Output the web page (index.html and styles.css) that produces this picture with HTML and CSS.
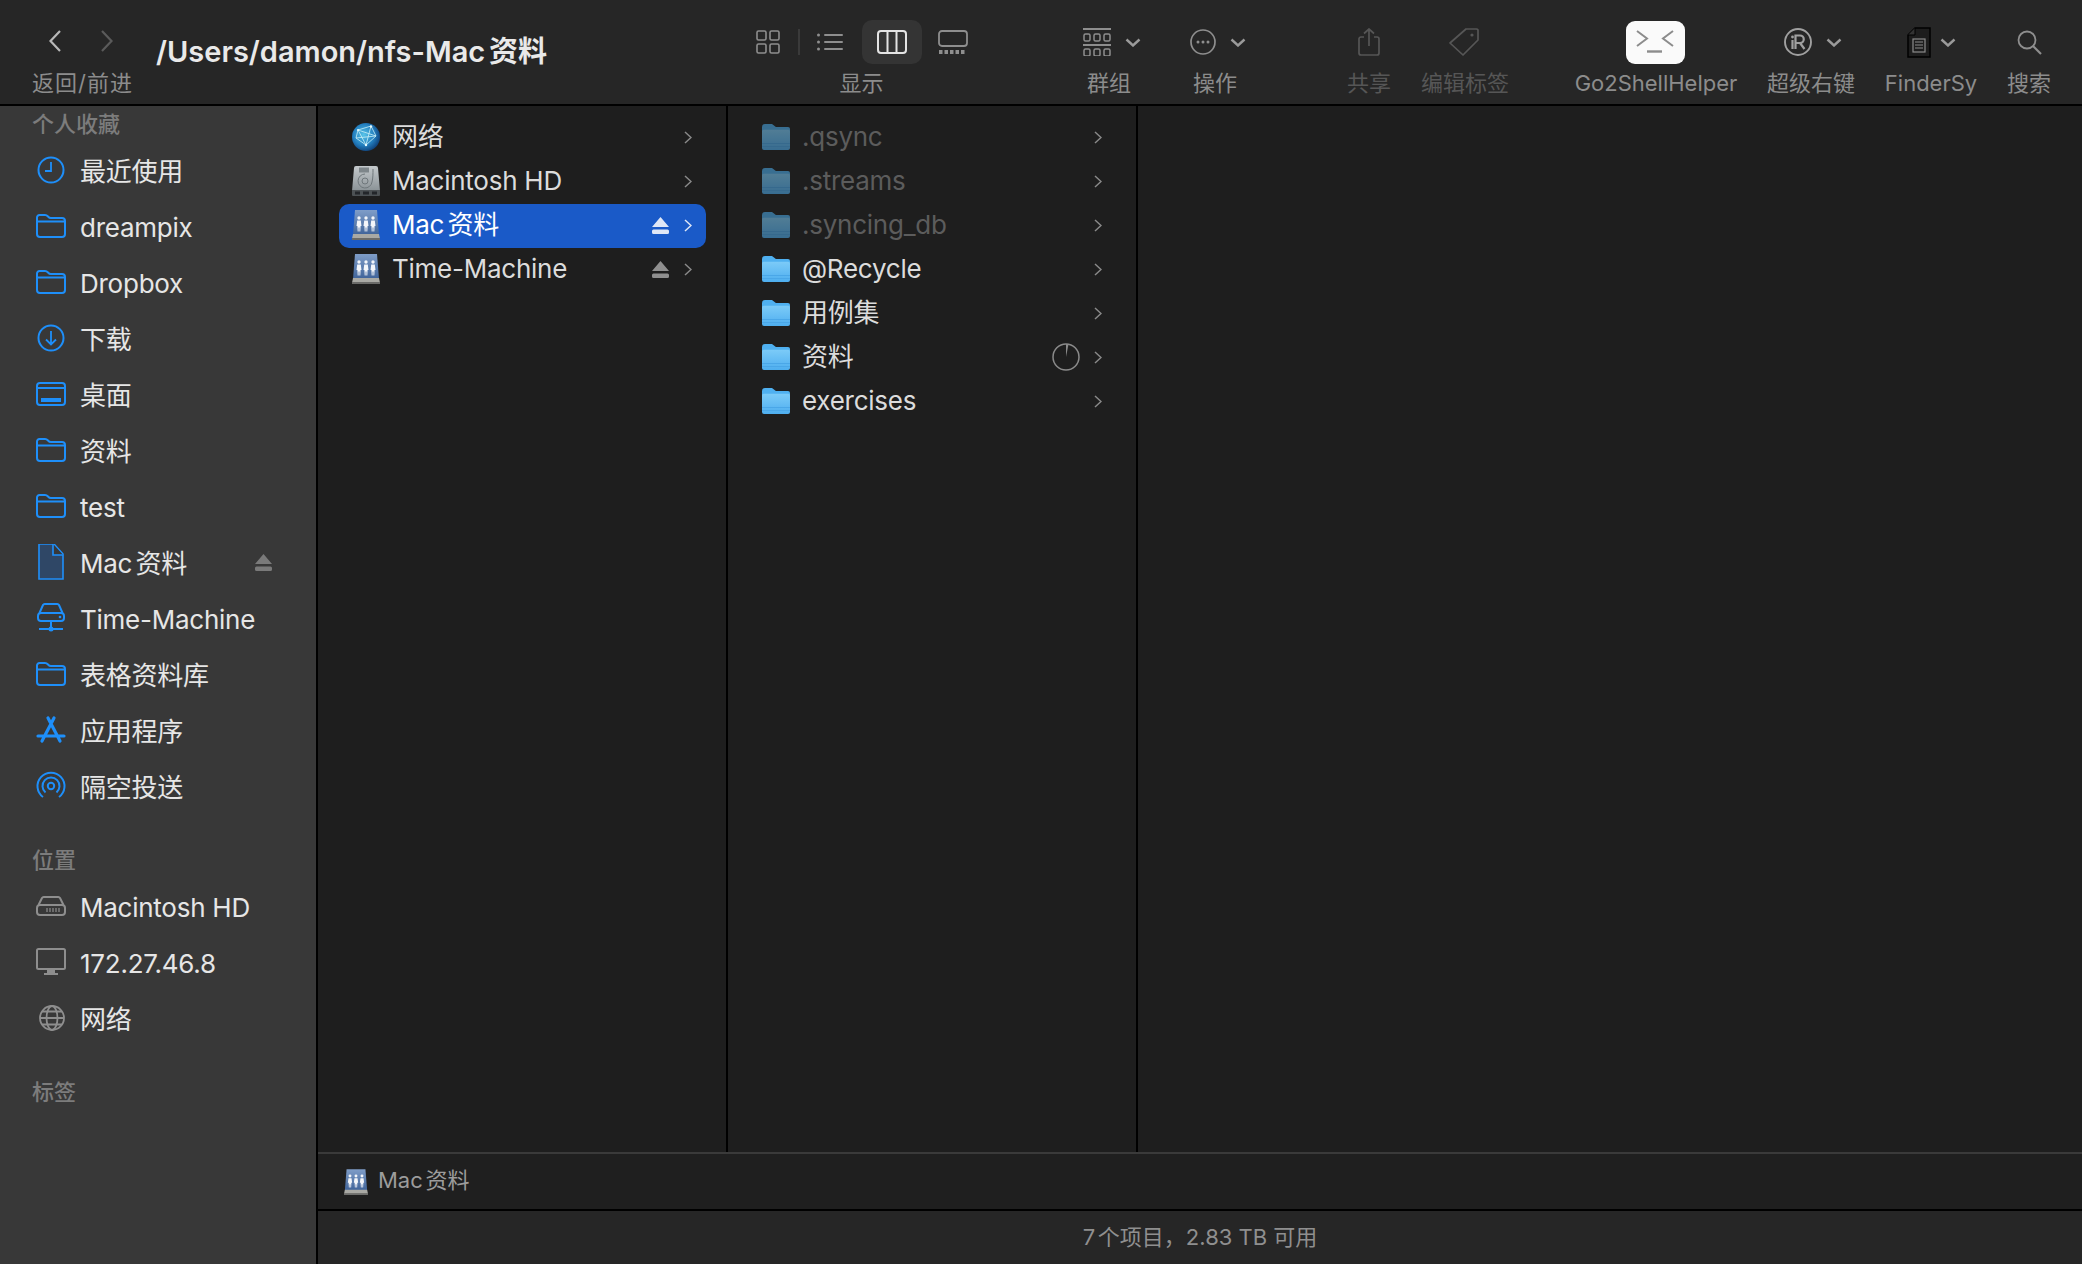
FILE: index.html
```html
<!doctype html>
<html lang="zh-CN">

<head>
	<title>Mac资料</title>
	<link rel="stylesheet" href="styles.css">
</head>

<body>

	<!-- shared icons -->
	<svg class="defs">
		<defs>
			<linearGradient id="g-folder" x1="0" y1="0" x2="0" y2="1">
				<stop offset="0" stop-color="#7ccbf8"/>
				<stop offset="1" stop-color="#4eaeef"/>
			</linearGradient>
			<linearGradient id="g-vol" x1="0" y1="0" x2="0" y2="1">
				<stop offset="0" stop-color="#7f9dc8"/>
				<stop offset="1" stop-color="#3f6399"/>
			</linearGradient>
			<linearGradient id="g-hd" x1="0" y1="0" x2="0" y2="1">
				<stop offset="0" stop-color="#c4c9cc"/>
				<stop offset="1" stop-color="#8a9296"/>
			</linearGradient>
			<radialGradient id="g-globe" cx="0.42" cy="0.42" r="0.62">
				<stop offset="0" stop-color="#58c4e8"/>
				<stop offset="0.6" stop-color="#2480c0"/>
				<stop offset="1" stop-color="#0e3f78"/>
			</radialGradient>
		</defs>
		<symbol id="i-folder" viewBox="0 0 30 24">
			<path d="M1 20V3.5A2.5 2.5 0 0 1 3.500 1H9c1.500 0 2.200.6 3 1.500.8.9 1.500 1.500 3 1.500h11a3 3 0 0 1 3 3v13a3 3 0 0 1-3 3H4a3 3 0 0 1-3-3zM1 7.500h28" fill="none" stroke="currentColor" stroke-width="2"/>
		</symbol>
		<symbol id="i-big-folder" viewBox="0 0 28 26">
			<path d="M0 3a3 3 0 0 1 3-3h6c1.500 0 2 .6 3 1.500.8.8 1.400 1.500 3 1.500h11a2 2 0 0 1 2 2v4H0z" fill="#4fb0f0"/>
			<path d="M0 7.500c0-1 .8-1.800 1.800-1.800h24.400c1 0 1.800.8 1.800 1.800V24a2 2 0 0 1-2 2H2a2 2 0 0 1-2-2z" fill="url(#g-folder)"/>
			<path d="M0 19.500h28M0 22.500h28" stroke="#4aa7e8" stroke-width="1"/>
		</symbol>
		<symbol id="i-vol" viewBox="0 0 28 30">
			<path d="M3 0h22l2 25H1z" fill="url(#g-vol)"/>
			<path d="M1 24h26l1 5a1 1 0 0 1-1 1H1a1 1 0 0 1-1-1z" fill="#a9a9a4"/>
			<path d="M0 28h28v2H0z" fill="#6a6a68"/>
			<g fill="#f4f6fa">
				<circle cx="7" cy="8" r="1.700"/>
				<circle cx="14" cy="8" r="1.700"/>
				<circle cx="21" cy="8" r="1.700"/>
				<path d="M5.200 10.500h3.600l.7 5.500h-.9l-.3 5.500H7.400v-4h-.8v4H5.700L5.400 16h-.9zM12.200 10.500h3.600l.7 5.500h-.9l-.3 5.500h-.9v-4h-.8v4h-.9l-.3-5.500h-.9zM19.200 10.500h3.600l.7 5.500h-.9l-.3 5.500h-.9v-4h-.8v4h-.9l-.3-5.500h-.9z"/>
			</g>
		</symbol>
		<symbol id="i-hd" viewBox="0 0 28 30">
			<path d="M4 0h20a2 2 0 0 1 2 2l2 23H0L2 2a2 2 0 0 1 2-2z" fill="url(#g-hd)"/>
			<path d="M7 1.500h10v5H7z" fill="#7e868a"/>
			<path d="M21 3c0 5 0 9-1 13a7 7 0 1 1-7-8" fill="none" stroke="#6f777b" stroke-width="1"/>
			<circle cx="13" cy="15" r="3" fill="none" stroke="#6f777b" stroke-width="1"/>
			<path d="M0 24h28v5a1 1 0 0 1-1 1H1a1 1 0 0 1-1-1z" fill="#4c5154"/>
			<path d="M3 27h5M11 27h6M20 27h5" stroke="#23262a" stroke-width="3"/>
		</symbol>
		<symbol id="i-globe" viewBox="0 0 28 28">
			<circle cx="14" cy="14" r="14" fill="url(#g-globe)"/>
			<path d="M6 7 19 3 24 13 14 22 4 15zM6 7l8 15M19 3l-5 19M4 15l20-2M6 7l18 6" fill="none" stroke="#c9f0f8" stroke-width="0.8"/>
			<circle cx="19" cy="3.500" r="1.200" fill="#e4fbff"/>
			<circle cx="14" cy="22" r="1.200" fill="#e4fbff"/>
			<circle cx="6" cy="7" r="1" fill="#e4fbff"/>
		</symbol>
		<symbol id="i-chev" viewBox="0 0 8 13">
			<path d="M1 1l6 5.500L1 12" fill="none" stroke="currentColor" stroke-width="1.500"/>
		</symbol>
		<symbol id="i-eject" viewBox="0 0 17 17">
			<path d="M8.500 0 17 10H0z M1.500 12.500h14a1.500 1.500 0 0 1 1.500 1.500v1.500a1.500 1.500 0 0 1-1.500 1.500h-14A1.500 1.500 0 0 1 0 15.500V14a1.500 1.500 0 0 1 1.500-1.500z" fill="currentColor"/>
		</symbol>
		<symbol id="i-down" viewBox="0 0 16 9">
			<path d="M1.500 1.500 8 7.500l6.500-6" fill="none" stroke="currentColor" stroke-width="2.400"/>
		</symbol>
	</svg>

	<header class="toolbar">
		<div class="tool tool-nav">
			<div class="tool-icons nav-icons">
				<svg width="12" height="22" viewBox="0 0 12 22"><path d="M11 1 1.500 11 11 21" fill="none" stroke="#b8b8b8" stroke-width="2.200"/></svg>
				<svg width="12" height="22" viewBox="0 0 12 22"><path d="M1 1l9.500 10L1 21" fill="none" stroke="#5a5a5a" stroke-width="2.200"/></svg>
			</div>
			<span class="tool-label label-wide">返回/前进</span>
		</div>

		<h1 class="title">/Users/damon/nfs-Mac资料</h1>

		<div class="tool tool-view">
			<div class="tool-icons view-icons">
				<span class="view-btn">
					<svg width="24" height="24" viewBox="0 0 24 24"><g fill="none" stroke="currentColor" stroke-width="1.600"><rect x="1" y="1" width="9" height="9" rx="1.500"/><rect x="14" y="1" width="9" height="9" rx="1.500"/><rect x="1" y="14" width="9" height="9" rx="1.500"/><rect x="14" y="14" width="9" height="9" rx="1.500"/></g></svg>
				</span>
				<span class="view-sep"></span>
				<span class="view-btn">
					<svg width="26" height="18" viewBox="0 0 26 18"><g fill="currentColor"><circle cx="1.500" cy="2" r="1.500"/><circle cx="1.500" cy="9" r="1.500"/><circle cx="1.500" cy="16" r="1.500"/><rect x="7" y="1" width="19" height="2" rx="1"/><rect x="7" y="8" width="19" height="2" rx="1"/><rect x="7" y="15" width="19" height="2" rx="1"/></g></svg>
				</span>
				<span class="view-btn view-btn-on">
					<svg width="30" height="24" viewBox="0 0 30 24"><g fill="none" stroke="currentColor" stroke-width="2"><rect x="1" y="1" width="28" height="22" rx="3"/><path d="M10.500 1v22M19.500 1v22"/></g></svg>
				</span>
				<span class="view-btn">
					<svg width="30" height="24" viewBox="0 0 30 24"><rect x="1" y="1" width="28" height="15" rx="3" fill="none" stroke="currentColor" stroke-width="1.800"/><g fill="currentColor"><rect x="1" y="20" width="3.500" height="4"/><rect x="6.500" y="20" width="3.500" height="4"/><rect x="12" y="20" width="3.500" height="4"/><rect x="17.500" y="20" width="3.500" height="4"/><rect x="23" y="20" width="3.500" height="4"/></g></svg>
				</span>
			</div>
			<span class="tool-label">显示</span>
		</div>

		<div class="tool tool-group">
			<div class="tool-icons">
				<svg width="28" height="28" viewBox="0 0 28 28"><g fill="none" stroke="currentColor" stroke-width="1.500"><path d="M0 1h28M0 17h28" stroke-width="2"/><rect x="1" y="6" width="6" height="7" rx="1.500"/><rect x="11" y="6" width="6" height="7" rx="1.500"/><rect x="21" y="6" width="6" height="7" rx="1.500"/><rect x="1" y="21" width="6" height="7" rx="1.500"/><rect x="11" y="21" width="6" height="7" rx="1.500"/><rect x="21" y="21" width="6" height="7" rx="1.500"/></g></svg>
				<svg class="down" width="16" height="9"><use href="#i-down"/></svg>
			</div>
			<span class="tool-label">群组</span>
		</div>

		<div class="tool tool-action">
			<div class="tool-icons">
				<svg width="26" height="26" viewBox="0 0 26 26"><circle cx="13" cy="13" r="12" fill="none" stroke="currentColor" stroke-width="1.700"/><g fill="currentColor"><circle cx="8" cy="13" r="1.500"/><circle cx="13" cy="13" r="1.500"/><circle cx="18" cy="13" r="1.500"/></g></svg>
				<svg class="down" width="16" height="9"><use href="#i-down"/></svg>
			</div>
			<span class="tool-label">操作</span>
		</div>

		<div class="tool tool-share is-off">
			<div class="tool-icons">
				<svg width="22" height="28" viewBox="0 0 22 28"><path d="M6 9H3a2 2 0 0 0-2 2v14a2 2 0 0 0 2 2h16a2 2 0 0 0 2-2V11a2 2 0 0 0-2-2h-3M11 18V1M6 5.500 11 1l5 4.500" fill="none" stroke="currentColor" stroke-width="1.700"/></svg>
			</div>
			<span class="tool-label">共享</span>
		</div>

		<div class="tool tool-tag is-off">
			<div class="tool-icons">
				<svg width="30" height="28" viewBox="0 0 30 28"><path d="M29 2v10L14 27 1 15 17 1h10a2 2 0 0 1 2 1z" fill="none" stroke="currentColor" stroke-width="1.700" stroke-linejoin="round"/><circle cx="23" cy="7" r="1.600" fill="currentColor"/></svg>
			</div>
			<span class="tool-label">编辑标签</span>
		</div>

		<div class="tool tool-go2">
			<div class="tool-icons">
				<svg width="59" height="43" viewBox="0 0 59 43"><rect width="59" height="43" rx="9" fill="#fafafa"/><path d="M11 10l10 7.500L11 25M47 10l-10 7.500L47 25" fill="none" stroke="#8c8c8c" stroke-width="2"/><path d="M21 30.500h15" stroke="#8c8c8c" stroke-width="2.400"/></svg>
			</div>
			<span class="tool-label">Go2ShellHelper</span>
		</div>

		<div class="tool tool-right">
			<div class="tool-icons">
				<svg width="28" height="28" viewBox="0 0 28 28"><circle cx="14" cy="14" r="13" fill="none" stroke="#a0a0a0" stroke-width="1.900"/><path d="M8.500 12v9M11.500 21V7.500H16a3.700 3.700 0 0 1 0 7.500h-4.500M16 15l4.500 6" fill="none" stroke="#a0a0a0" stroke-width="2.200"/><circle cx="8.500" cy="9" r="1.400" fill="#a0a0a0"/></svg>
				<svg class="down" width="16" height="9"><use href="#i-down"/></svg>
			</div>
			<span class="tool-label">超级右键</span>
		</div>

		<div class="tool tool-sync">
			<div class="tool-icons">
				<svg width="24" height="31" viewBox="0 0 24 31"><path d="M8 1h15v29H1V8z" fill="#1d1d1d" stroke="#000" stroke-width="1.500"/><path d="M8 1v7H1" fill="#333" stroke="#000" stroke-width="1"/><rect x="6" y="12" width="12" height="13" fill="none" stroke="#8c8c8c" stroke-width="1.200"/><path d="M8 15h8M8 18h8M8 21h8" stroke="#8c8c8c" stroke-width="1.200"/></svg>
				<svg class="down" width="16" height="9"><use href="#i-down"/></svg>
			</div>
			<span class="tool-label">FinderSy</span>
		</div>

		<div class="tool tool-search">
			<div class="tool-icons">
				<svg width="25" height="25" viewBox="0 0 25 25"><circle cx="10" cy="10" r="8.500" fill="none" stroke="currentColor" stroke-width="1.800"/><path d="M16 16l8 8" stroke="currentColor" stroke-width="2.200"/></svg>
			</div>
			<span class="tool-label">搜索</span>
		</div>
	</header>

	<div class="main">
		<aside class="sidebar">
			<h2 class="side-head">个人收藏</h2>
			<div class="side-row">
				<svg class="side-icon" viewBox="0 0 32 36"><circle cx="16" cy="18" r="12.500" fill="none" stroke="currentColor" stroke-width="2"/><path d="M16 10v9h-6" fill="none" stroke="currentColor" stroke-width="1.800"/></svg>
				<span>最近使用</span>
			</div>
			<div class="side-row"><svg class="side-icon"><use href="#i-folder" x="1" y="6" width="30" height="24"/></svg><span>dreampix</span></div>
			<div class="side-row"><svg class="side-icon"><use href="#i-folder" x="1" y="6" width="30" height="24"/></svg><span>Dropbox</span></div>
			<div class="side-row">
				<svg class="side-icon" viewBox="0 0 32 36"><circle cx="16" cy="18" r="12.500" fill="none" stroke="currentColor" stroke-width="2"/><path d="M16 11v13M11 19.500l5 5 5-5" fill="none" stroke="currentColor" stroke-width="1.800"/></svg>
				<span>下载</span>
			</div>
			<div class="side-row">
				<svg class="side-icon" viewBox="0 0 32 36"><rect x="2" y="7" width="28" height="22" rx="3" fill="none" stroke="currentColor" stroke-width="2"/><path d="M2 12h28" stroke="currentColor" stroke-width="2"/><rect x="6" y="22" width="20" height="4" fill="currentColor"/></svg>
				<span>桌面</span>
			</div>
			<div class="side-row"><svg class="side-icon"><use href="#i-folder" x="1" y="6" width="30" height="24"/></svg><span>资料</span></div>
			<div class="side-row"><svg class="side-icon"><use href="#i-folder" x="1" y="6" width="30" height="24"/></svg><span>test</span></div>
			<div class="side-row">
				<svg class="side-icon" viewBox="0 0 32 36"><path d="M4 0h15l9 10v25H4z" fill="#2f4766" stroke="currentColor" stroke-width="1.600"/><path d="M18 0v11h10" fill="#383838" stroke="currentColor" stroke-width="1.600"/></svg>
				<span>Mac资料</span>
				<svg class="side-eject"><use href="#i-eject"/></svg>
			</div>
			<div class="side-row">
				<svg class="side-icon" viewBox="0 0 32 36"><path d="M4 14 8 5a2 2 0 0 1 2-1h12a2 2 0 0 1 2 1l4 9M6 13h20a3 3 0 0 1 3 3v2a3 3 0 0 1-3 3H6a3 3 0 0 1-3-3v-2a3 3 0 0 1 3-3z" fill="none" stroke="currentColor" stroke-width="2"/><circle cx="25" cy="17" r="1.300" fill="currentColor"/><path d="M16 21v8M4 29h24" stroke="currentColor" stroke-width="2"/><circle cx="16" cy="29" r="2.500" fill="currentColor"/></svg>
				<span>Time-Machine</span>
			</div>
			<div class="side-row"><svg class="side-icon"><use href="#i-folder" x="1" y="6" width="30" height="24"/></svg><span>表格资料库</span></div>
			<div class="side-row">
				<svg class="side-icon" viewBox="0 0 32 36"><path d="M13 6l12 23M19 6 7 29M3 24h26" fill="none" stroke="currentColor" stroke-width="3.200" stroke-linecap="round"/></svg>
				<span>应用程序</span>
			</div>
			<div class="side-row">
				<svg class="side-icon" viewBox="0 0 32 36"><g fill="none" stroke="currentColor" stroke-width="2"><path d="M8 29A13.500 13.500 0 1 1 24 29"/><path d="M10.500 24.500A8.500 8.500 0 1 1 21.500 24.500"/></g><circle cx="16" cy="18" r="3.200" fill="none" stroke="currentColor" stroke-width="2"/></svg>
				<span>隔空投送</span>
			</div>

			<h2 class="side-head side-head-next">位置</h2>
			<div class="side-row side-row-gray">
				<svg class="side-icon" viewBox="0 0 32 36"><path d="M3 18 7 10a2 2 0 0 1 2-1h14a2 2 0 0 1 2 1l4 8M5 17h22a3 3 0 0 1 3 3v4a3 3 0 0 1-3 3H5a3 3 0 0 1-3-3v-4a3 3 0 0 1 3-3z" fill="none" stroke="currentColor" stroke-width="2"/><path d="M12 20v4M15 20v4M18 20v4M21 20v4M24 20v4" stroke="currentColor" stroke-width="1.200"/></svg>
				<span>Macintosh HD</span>
			</div>
			<div class="side-row side-row-gray">
				<svg class="side-icon" viewBox="0 0 32 36"><rect x="2" y="5" width="28" height="20" rx="1.500" fill="none" stroke="currentColor" stroke-width="2"/><path d="M12 26h8v3h-8zM9 29h14v2H9z" fill="currentColor"/></svg>
				<span>172.27.46.8</span>
			</div>
			<div class="side-row side-row-gray">
				<svg class="side-icon" viewBox="0 0 32 36"><g fill="none" stroke="currentColor" stroke-width="1.800"><circle cx="17" cy="18" r="12"/><ellipse cx="17" cy="18" rx="5.500" ry="12"/><path d="M5 18h24M7 11.500h20M7 24.500h20"/></g></svg>
				<span>网络</span>
			</div>

			<h2 class="side-head side-head-next">标签</h2>
		</aside>

		<div class="content">
			<div class="columns">
				<section class="col">
					<div class="col-row"><svg class="col-icon"><use href="#i-globe"/></svg><span class="col-name">网络</span><svg class="col-chev"><use href="#i-chev"/></svg></div>
					<div class="col-row"><svg class="col-icon"><use href="#i-hd"/></svg><span class="col-name">Macintosh HD</span><svg class="col-chev"><use href="#i-chev"/></svg></div>
					<div class="col-row col-row-on"><svg class="col-icon"><use href="#i-vol"/></svg><span class="col-name">Mac资料</span><svg class="col-eject"><use href="#i-eject"/></svg><svg class="col-chev"><use href="#i-chev"/></svg></div>
					<div class="col-row"><svg class="col-icon"><use href="#i-vol"/></svg><span class="col-name">Time-Machine</span><svg class="col-eject"><use href="#i-eject"/></svg><svg class="col-chev"><use href="#i-chev"/></svg></div>
				</section>
				<section class="col">
					<div class="col-row col-row-hidden"><svg class="col-icon"><use href="#i-big-folder"/></svg><span class="col-name">.qsync</span><svg class="col-chev"><use href="#i-chev"/></svg></div>
					<div class="col-row col-row-hidden"><svg class="col-icon"><use href="#i-big-folder"/></svg><span class="col-name">.streams</span><svg class="col-chev"><use href="#i-chev"/></svg></div>
					<div class="col-row col-row-hidden"><svg class="col-icon"><use href="#i-big-folder"/></svg><span class="col-name">.syncing_db</span><svg class="col-chev"><use href="#i-chev"/></svg></div>
					<div class="col-row"><svg class="col-icon"><use href="#i-big-folder"/></svg><span class="col-name">@Recycle</span><svg class="col-chev"><use href="#i-chev"/></svg></div>
					<div class="col-row"><svg class="col-icon"><use href="#i-big-folder"/></svg><span class="col-name">用例集</span><svg class="col-chev"><use href="#i-chev"/></svg></div>
					<div class="col-row">
						<svg class="col-icon"><use href="#i-big-folder"/></svg>
						<span class="col-name">资料</span>
						<svg class="col-progress" viewBox="0 0 28 28"><circle cx="14" cy="14" r="13" fill="none" stroke="#8a8a8a" stroke-width="1.500"/><path d="M14 14V1l2.500.3z" fill="#8a8a8a"/></svg>
						<svg class="col-chev"><use href="#i-chev"/></svg>
					</div>
					<div class="col-row"><svg class="col-icon"><use href="#i-big-folder"/></svg><span class="col-name">exercises</span><svg class="col-chev"><use href="#i-chev"/></svg></div>
				</section>
				<section class="col col-last"></section>
			</div>
			<div class="pathbar">
				<svg class="path-icon"><use href="#i-vol"/></svg>
				<span class="path-name">Mac资料</span>
			</div>
			<footer class="status">7个项目，2.83 TB 可用</footer>
		</div>
	</div>

</body>
</html>
```

FILE: styles.css
```css
:root {
	--blue: #1e8ffa;
	--gray-icon: #8e8e8e;
	--label: #8c8c8c;
	--label-off: #565656;
	--line: #000000;
}

* {
	box-sizing: border-box;
}

html, body {
	margin: 0;
	height: 100%;
}

body {
	display: flex;
	flex-direction: column;
	height: 100vh;
	overflow: hidden;
	background: #1e1e1e;
	color: #e6e6e6;
	font-family: Inter, "Noto Sans CJK SC", sans-serif;
	font-size: 26px;
	line-height: 30px;
	letter-spacing: -0.25px;
	text-autospace: normal;
}

.defs {
	position: absolute;
	width: 0;
	height: 0;
}

/* toolbar */

.toolbar {
	display: flex;
	align-items: flex-start;
	flex: none;
	height: 106px;
	padding: 20px 0 0 32px;
	background: #262626;
	border-bottom: 2px solid var(--line);
}

.tool {
	display: flex;
	flex-direction: column;
	align-items: center;
	flex: none;
	color: var(--gray-icon);
}

.tool-icons {
	display: flex;
	align-items: center;
	justify-content: center;
	height: 44px;
	gap: 14px;
}

.tool-label {
	margin-top: 5px;
	padding-left: 2px;
	font-size: 22px;
	line-height: 28px;
	letter-spacing: 0;
	color: var(--label);
	white-space: nowrap;
}

.label-wide {
	padding-left: 0;
	letter-spacing: 1px;
}

.is-off,
.is-off .tool-label {
	color: var(--label-off);
}

.down {
	color: #9a9a9a;
}

.tool-nav {
	align-items: flex-start;
	width: 101px;
}

.nav-icons {
	gap: 40px;
	height: 42px;
	margin-bottom: 2px;
	padding-left: 17px;
}

.title {
	flex: none;
	width: 392px;
	margin: 12px 0 0 23px;
	font-size: 29px;
	line-height: 40px;
	font-weight: 600;
	letter-spacing: 0;
	color: #e9e9e9;
	white-space: nowrap;
}

.tool-view {
	width: 225px;
	margin-left: 200px;
}

.view-icons {
	gap: 0;
	width: 100%;
}

.view-btn {
	display: flex;
	align-items: center;
	justify-content: center;
	width: 40px;
	height: 44px;
}

.view-btn-on {
	width: 60px;
	margin: 0 11px 0 12px;
	background: #343434;
	border-radius: 10px;
	color: #e4e4e4;
}

.view-sep {
	width: 2px;
	height: 26px;
	margin: 0 10px;
	background: #3a3a3a;
}

.tool-group {
	width: 94px;
	margin-left: 88px;
}

.tool-group .tool-icons {
	padding-left: 8px;
}

.tool-action {
	width: 94px;
	margin-left: 12px;
}

.tool-action .tool-icons {
	padding-left: 8px;
}

.tool-share {
	width: 60px;
	margin-left: 77px;
}

.tool-share .tool-icons,
.tool-search .tool-icons {
	padding-left: 2px;
}

.tool-tag {
	width: 100px;
	margin-left: 16px;
}

.tool-go2 {
	width: 170px;
	margin-left: 56px;
}

.tool-right {
	width: 100px;
	margin-left: 20px;
}

.tool-right .tool-icons {
	padding-left: 6px;
}

.tool-sync {
	width: 100px;
	margin-left: 20px;
}

.tool-sync .tool-icons {
	gap: 9px;
	padding-left: 3px;
}

.tool-search {
	width: 60px;
	margin-left: 18px;
}

/* window body */

.main {
	display: flex;
	flex: 1;
	min-height: 0;
}

.sidebar {
	flex: none;
	width: 318px;
	background: #383838;
	border-right: 2px solid var(--line);
}

.side-head {
	margin: 0;
	padding-left: 32px;
	font-size: 22px;
	line-height: 36px;
	font-weight: 500;
	letter-spacing: 0;
	color: #7c7c7c;
}

.side-head-next {
	margin-top: 28px;
}

.side-row {
	display: flex;
	align-items: center;
	height: 56px;
	padding-left: 35px;
	color: #e6e6e6;
}

.side-row span {
	padding-top: 3px;
}

.side-icon {
	flex: none;
	width: 32px;
	height: 36px;
	margin-right: 13px;
	color: var(--blue);
}

.side-row-gray .side-icon {
	color: var(--gray-icon);
}

.side-eject {
	flex: none;
	width: 17px;
	height: 17px;
	margin-left: auto;
	margin-right: 44px;
	color: #7a7a7a;
}

/* columns */

.content {
	display: flex;
	flex-direction: column;
	flex: 1;
	min-width: 0;
}

.columns {
	display: flex;
	flex: 1;
	min-height: 0;
}

.col {
	flex: none;
	width: 410px;
	padding: 10px 20px 0 21px;
	background: #1e1e1e;
	border-right: 2px solid var(--line);
}

.col-last {
	flex: 1;
	border-right: 0;
}

.col-row {
	display: flex;
	align-items: center;
	height: 44px;
	padding: 0 14px 2px 13px;
	border-radius: 10px;
	color: #dcdcdc;
}

.col-row-on {
	background: #1a5ac8;
	color: #ffffff;
}

.col-row-hidden {
	color: #5c5c5c;
}

.col-row-hidden .col-icon {
	opacity: 0.55;
}

.col-icon {
	flex: none;
	width: 28px;
	height: 30px;
	margin-right: 12px;
}

.col-name {
	flex: 1;
	white-space: nowrap;
}

.col-chev {
	flex: none;
	width: 8px;
	height: 13px;
	color: #8a8a8a;
}

.col-row-on .col-chev {
	color: #dfe7f6;
}

.col-eject {
	flex: none;
	width: 17px;
	height: 17px;
	margin-right: 15px;
	color: #8f8f8f;
}

.col-row-on .col-eject {
	color: #dfe7f6;
}

.col-progress {
	flex: none;
	width: 28px;
	height: 28px;
	margin-right: 14px;
}

/* path and status bars */

.pathbar {
	display: flex;
	align-items: center;
	flex: none;
	height: 59px;
	padding-left: 26px;
	background: #1f1f1f;
	border-top: 2px solid #3a3a3a;
	border-bottom: 2px solid var(--line);
	font-size: 22px;
	line-height: 28px;
	letter-spacing: 0;
	color: #9c9c9c;
}

.path-icon {
	flex: none;
	width: 24px;
	height: 26px;
	margin-right: 10px;
}

.path-name {
	padding-bottom: 4px;
}

.status {
	display: flex;
	align-items: center;
	justify-content: center;
	flex: none;
	height: 53px;
	padding-bottom: 2px;
	background: #262626;
	font-size: 22px;
	line-height: 28px;
	letter-spacing: 0;
	color: #8f8f8f;
}
```
